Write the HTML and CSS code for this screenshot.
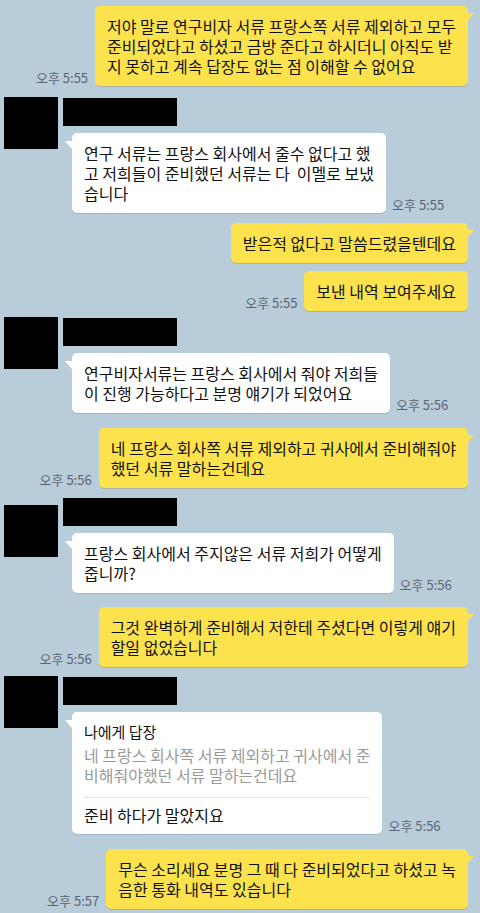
FILE: index.html
```html
<!DOCTYPE html>
<html>
<head>
	<meta charset="utf-8">
	<title>채팅</title>
<link rel="stylesheet" href="styles.css">
</head>

<body>

<div id="chat">

<div class="row me row_y1">
<div class="time">오후 5:55</div>
<div class="bubble yellow">저야 말로 연구비자 서류 프랑스쪽 서류 제외하고 모두<br>준비되었다고 하셨고 금방 준다고 하시더니 아직도 받<br>지 못하고 계속 답장도 없는 점 이해할 수 없어요</div>
</div>

<div class="row them row_t1">
<div class="avatar"></div>
<div class="body">
<div class="name"></div>
<div class="line">
<div class="bubble white">연구 서류는 프랑스 회사에서 줄수 없다고 했<br>고 저희들이 준비했던 서류는 다&nbsp; 이멜로 보냈<br>습니다</div>
<div class="time">오후 5:55</div>
</div>
</div>
</div>

<div class="row me row_y2">
<div class="bubble yellow">받은적 없다고 말씀드렸을텐데요</div>
</div>

<div class="row me row_y3">
<div class="time">오후 5:55</div>
<div class="bubble yellow notail">보낸 내역 보여주세요</div>
</div>

<div class="row them row_t2">
<div class="avatar"></div>
<div class="body">
<div class="name"></div>
<div class="line">
<div class="bubble white">연구비자서류는 프랑스 회사에서 줘야 저희들<br>이 진행 가능하다고 분명 얘기가 되었어요</div>
<div class="time">오후 5:56</div>
</div>
</div>
</div>

<div class="row me row_y4">
<div class="time">오후 5:56</div>
<div class="bubble yellow">네 프랑스 회사쪽 서류 제외하고 귀사에서 준비해줘야<br>했던 서류 말하는건데요</div>
</div>

<div class="row them row_t3">
<div class="avatar avatar_low"></div>
<div class="body">
<div class="name"></div>
<div class="line">
<div class="bubble white">프랑스 회사에서 주지않은 서류 저희가 어떻게<br>줍니까?</div>
<div class="time">오후 5:56</div>
</div>
</div>
</div>

<div class="row me row_y5">
<div class="time">오후 5:56</div>
<div class="bubble yellow">그것 완벽하게 준비해서 저한테 주셨다면 이렇게 얘기<br>할일 없었습니다</div>
</div>

<div class="row them row_t4">
<div class="avatar"></div>
<div class="body">
<div class="name"></div>
<div class="line">
<div class="bubble white reply">
<div class="reply_title">나에게 답장</div>
<div class="reply_quote">네 프랑스 회사쪽 서류 제외하고 귀사에서 준<br>비해줘야했던 서류 말하는건데요</div>
<div class="reply_text">준비 하다가 말았지요</div>
</div>
<div class="time">오후 5:56</div>
</div>
</div>
</div>

<div class="row me row_y7">
<div class="time">오후 5:57</div>
<div class="bubble yellow">무슨 소리세요 분명 그 때 다 준비되었다고 하셨고 녹<br>음한 통화 내역도 있습니다</div>
</div>

</div>

</body>

</html>
```

FILE: styles.css
```css
html, body {
	margin: 0;
	padding: 0;
	background-color: #b9ccda;
}

#chat {
	width: 480px;
	height: 913px;
	overflow: hidden;
	box-sizing: border-box;
	padding: 6px 12px 0 4px;

	font-family: "Noto Sans CJK KR", "Noto Sans", sans-serif;
	color: #111;
}

.row {
	display: flex;
	align-items: flex-start;
}

.row.me {
	justify-content: flex-end;
	align-items: flex-end;
	gap: 7px;
}

.row_t1 { margin-top: 11px; }
.row_y2 { margin-top: 10px; }
.row_y3 { margin-top: 8px; }
.row_t2 { margin-top: 6px; }
.row_y4 { margin-top: 15px; }
.row_t3 { margin-top: 9px; }
.row_y5 { margin-top: 14px; }
.row_t4 { margin-top: 9px; }
.row_y7 { margin-top: 15px; }

.avatar {
	width: 54px;
	height: 52px;
	background-color: #000;
	flex-shrink: 0;
}

.avatar_low {
	margin-top: 8px;
}

.body {
	margin-left: 5px;
}

.name {
	width: 114px;
	height: 28px;
	margin-top: 1px;
	background-color: #000;
}

.line {
	display: flex;
	align-items: flex-end;
	gap: 6px;
	margin-top: 7px;
	margin-left: 9px;
}

.bubble {
	position: relative;
	padding: 10px 12px;
	border-radius: 5px;

	font-size: 16px;
	line-height: 20px;
	white-space: nowrap;
}

.yellow {
	background-color: #fce34e;
	box-shadow: 0 1px 0 rgba(120, 100, 20, 0.25);
}

.yellow::after {
	content: "";
	position: absolute;
	right: -6px;
	top: 7px;
	width: 0;
	height: 0;
	border-top: 8px solid #fce34e;
	border-right: 7px solid transparent;
}

.yellow.notail::after {
	display: none;
}

.white {
	background-color: #fff;
	box-shadow: 0 1px 0 rgba(60, 80, 100, 0.18);
}

.white::after {
	content: "";
	position: absolute;
	left: -7px;
	top: 8px;
	width: 0;
	height: 0;
	border-top: 8px solid #fff;
	border-left: 7px solid transparent;
}

.time {
	font-size: 13px;
	line-height: 14px;
	color: #5a6571;
	white-space: nowrap;
	margin-bottom: 1px;
}

.reply {
	padding-bottom: 9px;
}

.reply_title {
	font-size: 15px;
}

.reply_quote {
	margin-top: 3px;
	color: #9a9a9a;
	padding-bottom: 12px;
	border-bottom: 1px solid #e4e4e4;
}

.reply_text {
	margin-top: 7px;
}
```
